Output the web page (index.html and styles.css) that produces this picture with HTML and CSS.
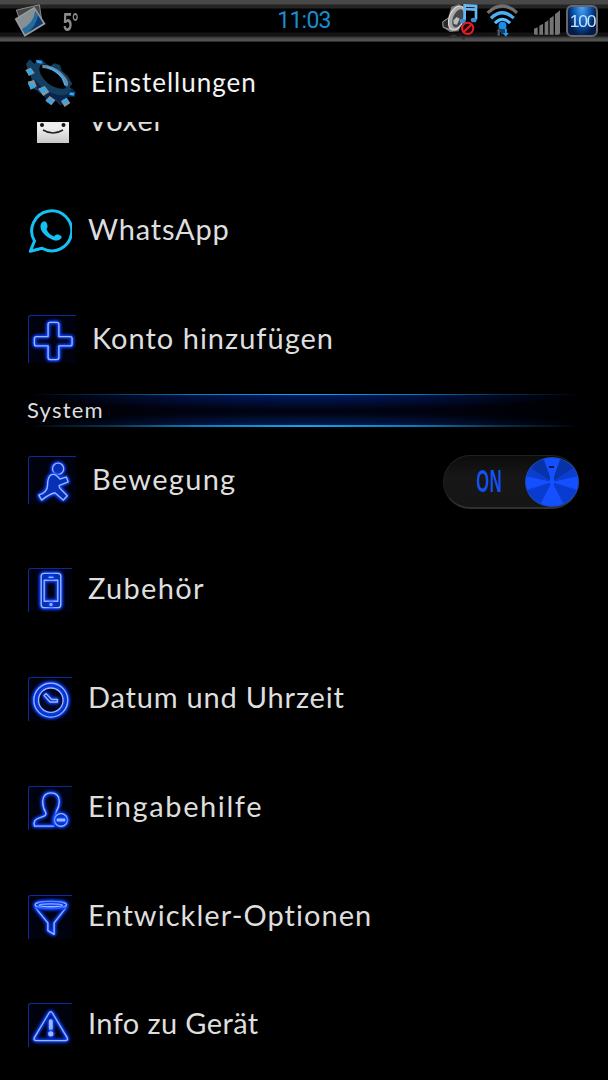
FILE: index.html
```html
<!DOCTYPE html>
<html lang="de">
<head>
    <meta charset="UTF-8">
    <meta name="viewport" content="width=device-width, initial-scale=1.0">
    <title>Einstellungen</title>
    <link rel="stylesheet" href="styles.css">
</head>
<body>
<div class="screen">
    <div class="status-bar">
        <div class="status-left">
            <svg class="photo-icon" viewBox="0 0 100 102">
                <path d="M7 18L77 2 84 50 30 80Z" fill="#474747" stroke="#8b8b8b" stroke-width="3"/>
                <path d="M2 44L62 8 96 60 32 99Z" fill="#999"/>
                <path d="M9 46L61 15 88 58 34 91Z" fill="#858f94"/>
                <path d="M65 20L88 58 34 91 24 75Q58 60 65 20Z" fill="#256c9b"/>
                <path d="M73 34L88 58 44 85Q68 62 73 34Z" fill="#0a397c"/>
            </svg>
            <span class="temp">5°</span>
        </div>
        <span class="clock">11:03</span>
        <div class="status-right">
            <svg class="sound-icon" viewBox="0 0 108 108">
                <path d="M2 52L18 42 28 8 52 0 68 36 50 82 24 84 2 70Z" fill="#777"/>
                <path d="M2 54L22 40 24 76 4 70Z" fill="#292929" stroke="#999" stroke-width="3"/>
                <ellipse cx="44" cy="42" rx="22" ry="38" transform="rotate(22 44 42)" fill="#aaa" stroke="#ddd" stroke-width="3"/>
                <ellipse cx="48" cy="43" rx="15" ry="29" transform="rotate(22 48 43)" fill="#484848"/>
                <path d="M34 49l10-10 9 5-8 18-10-2z" fill="#bbb"/>
                <path d="M68 49V4l34 2v40M68 15l34 2" fill="none" stroke="#66b8f4" stroke-width="8"/>
                <ellipse cx="62" cy="51" rx="9" ry="7" fill="#378eda"/>
                <ellipse cx="95" cy="48" rx="9" ry="7" fill="#378eda"/>
                <circle cx="77" cy="73" r="17" fill="#250505" stroke="#e31f25" stroke-width="6"/>
                <path d="M65 84L89 61" stroke="#e31f25" stroke-width="6"/>
                <path d="M22 102q12-13 22-4M52 97l16 8" stroke="#333" stroke-width="6" fill="none"/>
            </svg>
            <svg class="wifi-icon" viewBox="0 0 100 100">
                <g fill="none">
                    <path d="M5 27Q50-15 94 27" stroke="#707070" stroke-width="10"/>
                    <path d="M15 43Q50 10 84 43" stroke="#4aaef5" stroke-width="10"/>
                    <path d="M27 58Q50 34 73 58" stroke="#5abcff" stroke-width="9"/>
                </g>
                <circle cx="50" cy="66" r="12" fill="#178ee8"/>
                <path d="M43 76h14l-2 16h-9z" fill="#123e6c"/>
                <path d="M35 96V80l-6 7 10-14 9 14-6-5v14z" fill="#4b5962"/>
                <path d="M57 74v14h-6l9 11 9-11h-6V74z" fill="#259cf1"/>
            </svg>
            <svg class="signal-icon" viewBox="0 0 78 74" fill="#747474">
                <path d="M0 56l11-5v23H3l-3-3zM16 47l11-6v33H16zM32 37l11-7v44H32zM47 25l12-8v57H47zM63 12L78 0v70l-4 4H63z"/>
            </svg>
            <div class="battery"><span>100</span></div>
        </div>
    </div>

    <header class="title-bar">
        <svg class="gear-icon" viewBox="0 0 195 165">
            <path fill="#143e5f" fill-rule="evenodd" d="M24 46L18 27 29 13 44 27 52 14 66 14 76 25 91 34 102 25 120 30 125 47 142 62 157 86 149 96 167 111 164 126 143 126 139 146 119 149 108 137 98 145 82 143 76 127 59 113 48 104 32 101 24 84 36 78 32 60ZM63 30C48 44 70 78 95 92C119 105 144 105 142 87C139 64 103 34 80 29Q69 27 63 30Z"/>
            <path fill="#08254d" d="M43 70Q66 107 105 118Q143 130 156 98L165 112 162 126 143 126 139 145 120 147 109 135 96 143 82 140 75 125 51 101Z"/>
            <path d="M67 34Q99 34 123 59T136 92" fill="none" stroke="#6b8ba2" stroke-width="10"/>
            <path d="M81 37Q110 45 127 69L136 91" fill="none" stroke="#41adf2" stroke-width="5"/>
            <g fill="#8a9499">
                <path d="M16 45l16-7 12 16-17 9zM23 80l19-5 8 19-18 10zM54 101l20-8 14 18-18 12zM76 137l13-14 17 12-12 16zM123 138l17-10 11 16-17 12z"/>
            </g>
            <g fill="#27a9f5">
                <path d="M19 46l15-3 6 9-11 7zM24 87l13-2 9 13-13 2zM59 102l18-4 5 10-16 5zM77 134l19-1 4 8-12 4zM126 136l12-6 6 11-9 4zM47 15l17 2 4 9-16-2zM150 112l14 1-3 9-14-2z"/>
            </g>
        </svg>
        <h1>Einstellungen</h1>
    </header>

    <main class="settings">
        <div class="row voxer">
            <svg class="icon-plain" viewBox="0 0 44 44">
                <defs>
                    <linearGradient id="paper" x2="0" y2="1">
                        <stop offset=".65" stop-color="#eee"/>
                        <stop offset="1" stop-color="#c9c9c9"/>
                    </linearGradient>
                </defs>
                <path d="M9 0h32v43H9z" fill="url(#paper)"/>
                <circle cx="14" cy="25" r="2" fill="#111"/>
                <circle cx="35.500" cy="25" r="2" fill="#111"/>
                <path d="M15 30q10 6 20 0" fill="none" stroke="#222" stroke-width="1.500"/>
            </svg>
            <span class="label">Voxer</span>
        </div>
        <div class="row whatsapp">
            <svg class="icon-plain" viewBox="0 0 44 44">
                <path d="M6.500 32A20 20 0 1 1 14 39.300L2.300 42.300Z" fill="none" stroke="#13c1f5" stroke-width="3" stroke-linejoin="round"/>
                <path d="M14.500 13c2-1.500 4-.5 4.500 2 .5 2 1 3-.5 5 1.500 4 4 6 7.500 7.500 2-2 3-2.500 5-1.500 2.500 1 3.500 1.500 2 3.500-3 3-7 2.500-11 0-6-3.500-10-8-9.500-13 .3-1.600.8-2.500 2-3.500z" fill="#13c1f5"/>
            </svg>
            <span class="label">WhatsApp</span>
        </div>
        <div class="row konto">
            <svg class="tile big" viewBox="0 0 48 48">
                <path d="M21.500 6.500h7q2 0 2 2V21H42q2 0 2 2v5.500q0 2-2 2H30.500v12q0 2-2 2h-7q-2 0-2-2v-12h-12q-2 0-2-2V23q0-2 2-2h12V8.500q0-2 2-2z"/>
            </svg>
            <span class="label">Konto hinzufügen</span>
        </div>

        <h2 class="section">System</h2>

        <div class="row bewegung">
            <svg class="tile big" viewBox="0 0 48 48">
                <circle class="fill" cx="29.700" cy="12" r="5.700"/>
                <path class="fill" d="M21.500 19Q25 16.500 28 19L31.500 22.500 38 20.500 40 25.500 31 29Q30 29.500 32 32.500L39 39.500 35 44 26.500 36.500 Q20 38 13 44L10 39Q19 36 19 28.500Q19 22 21.500 19Z"/>
            </svg>
            <span class="label">Bewegung</span>
            <div class="toggle">
                <span class="toggle-text">ON</span>
                <div class="knob"></div>
            </div>
        </div>
        <div class="row zubehoer">
            <svg class="tile" viewBox="0 0 44 44">
                <path class="fill" fill-rule="evenodd" d="M15.500 4.500h14q3 0 3 3v29q0 3-3 3h-14q-3 0-3-3v-29q0-3 3-3zM15.500 11.500v21.500h14V11.500z"/>
                <path d="M20 8.500h5"/>
                <circle cx="22.500" cy="36.300" r="1"/>
            </svg>
            <span class="label">Zubehör</span>
        </div>
        <div class="row datum">
            <svg class="tile" viewBox="0 0 44 44">
                <circle class="fill" cx="22.300" cy="22.700" r="17.300"/>
                <circle class="hole" cx="22.300" cy="22.700" r="12.500"/>
                <path class="fill" d="M17.500 16L15.500 18 21.500 24.500H29V22H23Z"/>
            </svg>
            <span class="label">Datum und Uhrzeit</span>
        </div>
        <div class="row eingabe">
            <svg class="tile" viewBox="0 0 44 44">
                <path d="M26 40H5.500Q3.500 33 12 31Q19 29.500 17 26Q14 21 14 14.500Q14.500 6 22.600 6T31 14.500Q31 20 28 25L27 29Q24 34 27 38"/>
                <circle class="fill" cx="32.700" cy="33.700" r="6.500"/>
                <path d="M29 33h7.500v1.500H29z"/>
            </svg>
            <span class="label">Eingabehilfe</span>
        </div>
        <div class="row entwickler">
            <svg class="tile" viewBox="0 0 44 44">
                <path d="M6.300 9.500Q6.500 12.500 9 15L19.300 27.500V35.500L25.700 39.300V27.500L35.500 15Q38 12.500 38.300 9.500"/>
                <ellipse class="fill" cx="22.300" cy="9" rx="16" ry="3.500"/>
                <ellipse cx="22.300" cy="9.500" rx="12" ry="1.500"/>
            </svg>
            <span class="label">Entwickler-Optionen</span>
        </div>
        <div class="row info">
            <svg class="tile" viewBox="0 0 44 44">
                <path d="M20.500 9.200Q22.300 6.500 24 9.200L39 34.500Q40.500 37.500 37 37.500H8Q4 37.500 5.500 34.500Z"/>
                <path class="mark" d="M22.300 17.500V25"/>
                <circle class="dot" cx="22.300" cy="30.500" r="2"/>
            </svg>
            <span class="label">Info zu Gerät</span>
        </div>
    </main>
</div>
</body>
</html>
```
FILE: styles.css
```css
* {
    box-sizing: border-box;
}

body {
    margin: 0;
    background: #000;
    color: #dedede;
    font-family: Lato, "Noto Sans", sans-serif;
}

.screen {
    display: flex;
    flex-direction: column;
    height: 1080px;
    overflow: hidden;
}

.status-bar {
    display: grid;
    grid-template-columns: 1fr auto 1fr;
    height: 42px;
    background: linear-gradient(#484848 0 4px, #242424 5px 8px, #000 9px 32px, #141414 33px 36px, #333 37px, #505050 39px 41px, #111 42px);
}

.status-left {
    display: flex;
    align-items: flex-start;
    padding: 4px 0 0 14px;
}

.photo-icon {
    width: 33px;
    height: 34px;
}

.temp {
    margin: 4px 0 0 16px;
    color: #8b8b8b;
    font: bold 26px/28px "Liberation Sans", sans-serif;
    transform: scaleX(.63);
    transform-origin: left;
}

.clock {
    color: #168ed0;
    font: 23px/42px Roboto, sans-serif;
    letter-spacing: -.8px;
}

.status-right {
    display: flex;
    justify-content: flex-end;
    align-items: flex-start;
    padding: 4px 10px 0 0;
}

.sound-icon {
    width: 36px;
    height: 36px;
}

.wifi-icon {
    width: 33px;
    height: 33px;
    margin-left: 8px;
}

.signal-icon {
    width: 26px;
    height: 25px;
    margin: 6px 6px 0 15px;
}

.battery {
    display: flex;
    justify-content: center;
    width: 32px;
    height: 32px;
    margin-top: 1px;
    border: 2px solid #686868;
    border-radius: 6px;
    background: radial-gradient(ellipse at 50% 0, #4ba7f5, #0b55ae 45%, #041a47 75%);
    color: #c3e4ff;
    font: 17px/29px "Liberation Sans", sans-serif;
    letter-spacing: -1.2px;
}

.battery span {
    transform: scaleX(1.03);
}

.title-bar {
    display: flex;
    align-items: center;
    height: 80px;
    padding-left: 20px;
}

.gear-icon {
    width: 65px;
    height: 55px;
}

.title-bar h1 {
    margin: 0 0 1px 6px;
    color: #f4f4f4;
    font-size: 26px;
    font-weight: 400;
    letter-spacing: 1px;
}

.settings {
    flex: 1;
    overflow: hidden;
}

.row {
    display: flex;
    align-items: center;
    gap: 16px;
    height: 108.8px;
    padding: 0 29px 0 28px;
}

.row.voxer {
    margin-top: -54.4px;
}

.label {
    margin-bottom: 4px;
    font-size: 29px;
    line-height: 34px;
    letter-spacing: .8px;
    white-space: nowrap;
}

.konto .label {
    letter-spacing: 1px;
}

.bewegung .label,
.zubehoer .label {
    letter-spacing: 1.3px;
}

.eingabe .label {
    letter-spacing: 1.6px;
}

.entwickler .label {
    letter-spacing: 1.05px;
}

.info .label {
    letter-spacing: .4px;
}

.icon-plain,
.tile {
    flex: none;
    width: 44px;
    height: 44px;
}

.tile {
    border: solid #0a2b9b;
    border-width: 1px 0 0 1px;
    border-radius: 3px 0 0 0;
    background: #00020e;
    fill: none;
    stroke: #9bb5ff;
    stroke-width: 1.4;
    stroke-linejoin: round;
}

.tile.big {
    width: 48px;
    height: 48px;
    margin-bottom: 2px;
}

.tile > * {
    filter: drop-shadow(0 0 1px #0a45ff) drop-shadow(0 0 1px #0a45ff) drop-shadow(0 0 1.5px #0a3dff);
}

.tile .fill {
    fill: #0630b5;
}

.tile .hole {
    fill: #000622;
}

.tile .mark {
    stroke-width: 4;
    stroke-linecap: round;
}

.tile .dot {
    fill: #9bb5ff;
}

.section {
    height: 33px;
    margin: 0;
    padding-left: 27px;
    background:
        linear-gradient(90deg, transparent 5%, #0b334b 18%, #087dbc 32%, #19a5e2 50%, #087dbc 68%, #0b334b 82%, transparent 95%) 0 0 / 100% 1px no-repeat,
        linear-gradient(90deg, transparent 5%, #0b334b 18%, #087dbc 32%, #19a5e2 50%, #087dbc 68%, #0b334b 82%, transparent 95%) 0 100% / 100% 2px no-repeat,
        radial-gradient(ellipse 45% 50% at 50% 0, #001c66, transparent),
        radial-gradient(ellipse 45% 45% at 50% 100%, #001f5c, transparent),
        linear-gradient(90deg, #000, #00020f 30% 70%, #000);
    font-size: 22px;
    font-weight: 400;
    line-height: 32px;
    letter-spacing: 1.2px;
}

.toggle {
    display: flex;
    align-items: center;
    justify-content: space-between;
    width: 136px;
    height: 54px;
    margin: 2px 0 0 auto;
    border: 1px solid #202020;
    border-bottom: 2px solid #303030;
    border-radius: 27px;
    background: linear-gradient(#0c0c0c, #171717 40%, #151515);
}

.toggle-text {
    margin-left: 32px;
    color: #1450f5;
    font: bold 31px/50px "Liberation Sans", sans-serif;
    letter-spacing: 1px;
    transform: scaleX(.54);
    transform-origin: left;
}

.knob {
    width: 54px;
    height: 50px;
    flex: none;
    border: 1px solid #1c49bd;
    border-radius: 50%;
    background:
        linear-gradient(#001554, #001554) 50% 8px / 5px 2px no-repeat,
        linear-gradient(#1450ff, #1450ff) 50% 10px / 4px 22px no-repeat,
        conic-gradient(#1450ff 0 18deg, #0633a8 22deg 55deg, #0a3dd0 58deg 75deg, #1450ff 80deg 105deg, #083bd0 110deg 150deg, #1450ff 155deg 205deg, #083bd0 210deg 250deg, #1450ff 255deg 280deg, #0a3dd0 285deg 302deg, #0633a8 305deg 338deg, #1450ff 342deg);
}
```
